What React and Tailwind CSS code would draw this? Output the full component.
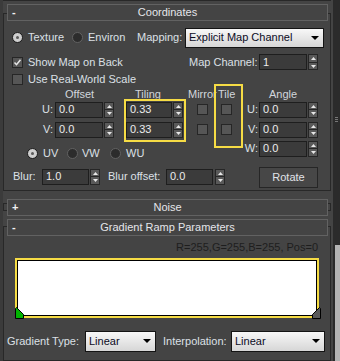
import React from 'react';

const Spinner = ({ className = '' }) => (
  <div className={`flex h-[16px] w-[10px] flex-col border border-[#262626] bg-[#595959] ${className}`}>
    <div className="flex flex-1 items-center justify-center border-b border-[#262626]">
      <svg width="5" height="3" viewBox="0 0 5 3">
        <path d="M2.5 0L5 3H0z" fill="#e8e8e8" />
      </svg>
    </div>
    <div className="flex flex-1 items-center justify-center">
      <svg width="5" height="3" viewBox="0 0 5 3">
        <path d="M0 0h5L2.5 3z" fill="#e8e8e8" />
      </svg>
    </div>
  </div>
);

const Field = ({ value, width = 'w-[48px]', className = '' }) => (
  <div
    className={`flex h-[16px] items-center border border-[#1e1e1e] bg-[#3b3b3b] pl-[3px] text-[#ececec] ${width} ${className}`}
  >
    {value}
  </div>
);

const Check = ({ on, className = '' }) => (
  <div
    className={`flex h-[11px] w-[11px] shrink-0 items-center justify-center border border-[#262626] bg-[#565656] ${className}`}
  >
    {on && (
      <svg width="9" height="9" viewBox="0 0 9 9">
        <path d="M1.5 4.5l2 2.2 4-5" stroke="#e6e6e6" strokeWidth="1.5" fill="none" />
      </svg>
    )}
  </div>
);

const Radio = ({ on, className = '' }) => (
  <div
    className={`flex h-[11px] w-[11px] shrink-0 items-center justify-center rounded-full border ${
      on ? 'border-[#1a1a1a] bg-[#cfcfcf]' : 'border-[#626262] bg-[#2c2c2c]'
    } ${className}`}
  >
    {on && <div className="h-[3px] w-[3px] rounded-full bg-[#5a5a5a]" />}
  </div>
);

const Dropdown = ({ label, width, className = '' }) => (
  <div
    className={`flex h-[20px] items-center justify-between border border-[#141414] bg-linear-to-b from-[#f8f8f8] to-[#d6d6d6] pl-[3px] pr-[4px] text-[#0b0b1e] ${width} ${className}`}
  >
    <span>{label}</span>
    <svg width="8" height="4" viewBox="0 0 8 4">
      <path d="M0 0h8L4 4z" fill="#000" />
    </svg>
  </div>
);

const RolloutHeader = ({ sign, title, className = '' }) => (
  <div
    className={`ml-[3px] flex h-[17px] w-[321px] items-center border border-[#626262] bg-[#444444] ${className}`}
  >
    <span className="w-[14px] pl-[4px] font-bold text-[#f2f2f2]">{sign}</span>
    <span className="flex-1 pr-[14px] text-center text-[#e4e6ea]">{title}</span>
  </div>
);

const Marker = ({ fill, flip }) => (
  <svg width="9" height="12" viewBox="0 0 9 12">
    <path
      d={flip ? 'M7.5 0.5L8.5 1.5V11.5H0.5V7.5L4 4z' : 'M1.5 0.5L0.5 1.5V11.5H8.5V7.5L5 4z'}
      fill={fill}
      stroke="#000"
      strokeWidth="1"
    />
  </svg>
);

export default function App() {
  return (
    <div className="flex h-[361px] w-[340px] overflow-hidden bg-[#444444] font-['Liberation_Sans',Arial,sans-serif] text-[11px] leading-none text-[#dce0e6]">
      <div className="w-[3px] shrink-0 bg-[#3b3b3b]" />

      <div className="flex w-[328px] shrink-0 flex-col">
        <div className="h-[1px] bg-[#282828]" />

        {/* Coordinates */}
        <div className="relative mt-[12px] h-[184px] border border-[#282828]">
          <RolloutHeader sign="-" title="Coordinates" className="-mt-[10px]" />

          <div className="mt-[7px] flex h-[20px] items-center pl-[8px]">
            <Radio on />
            <span className="ml-[5px] w-[39px]">Texture</span>
            <Radio className="ml-[5px]" />
            <span className="ml-[5px] w-[37px]">Environ</span>
            <span className="ml-[12px] w-[44px]">Mapping:</span>
            <Dropdown label="Explicit Map Channel" width="w-[139px]" className="ml-[4px]" />
          </div>

          <div className="mt-[6px] flex h-[17px] items-center pl-[8px]">
            <Check on />
            <span className="ml-[5px] w-[100px] whitespace-nowrap">Show Map on Back</span>
            <span className="ml-[61px] w-[67px] whitespace-nowrap">Map Channel:</span>
            <Field value="1" className="ml-[3px]" />
            <Spinner className="ml-[1px]" />
          </div>

          <div className="mt-[2px] flex h-[13px] items-center pl-[8px]">
            <Check />
            <span className="ml-[5px] whitespace-nowrap">Use Real-World Scale</span>
          </div>

          <div className="mt-[2px] flex">
            <div className="w-[240px]">
              <div className="flex h-[13px] items-center text-[#d2d6dc]">
                <span className="ml-[61px] w-[31px]">Offset</span>
                <span className="ml-[39px] w-[25px]">Tiling</span>
                <span className="ml-[28px] w-[27px] whitespace-nowrap">Mirror</span>
                <span className="ml-[3px]">Tile</span>
              </div>

              {['U:', 'V:'].map((l, i) => (
                <div key={l} className={`flex h-[16px] items-center ${i === 0 ? 'mt-[1px]' : 'mt-[4px]'}`}>
                  <span className="w-[49px] text-right">{l}</span>
                  <Field value="0.0" className="ml-[2px]" />
                  <Spinner className="ml-[1px]" />
                  <Field value="0.33" width="w-[46px]" className="ml-[12px]" />
                  <Spinner className="ml-[1px]" />
                  <Check className="ml-[14px]" />
                  <Check className="ml-[13px]" />
                </div>
              ))}

              <div className="mt-[9px] flex h-[14px] items-center">
                <Radio on className="ml-[23px]" />
                <span className="ml-[5px] w-[14px]">UV</span>
                <Radio className="ml-[10px]" />
                <span className="ml-[4px] w-[17px]">VW</span>
                <Radio className="ml-[11px]" />
                <span className="ml-[5px]">WU</span>
              </div>

              <div className="mt-[8px] flex h-[16px] items-center">
                <span className="ml-[9px] w-[22px]">Blur:</span>
                <Field value="1.0" width="w-[47px]" className="ml-[7px]" />
                <Spinner className="ml-[1px]" />
                <span className="ml-[8px] w-[55px] whitespace-nowrap">Blur offset:</span>
                <Field value="0.0" width="w-[47px]" className="ml-[3px]" />
                <Spinner className="ml-[2px]" />
              </div>
            </div>

            <div className="w-[86px]">
              <div className="flex h-[13px] items-center text-[#d2d6dc]">
                <span className="ml-[25px]">Angle</span>
              </div>
              {['U:', 'V:', 'W:'].map((l, i) => (
                <div
                  key={l}
                  className={`flex h-[16px] items-center ${i === 0 ? 'mt-[1px]' : i === 1 ? 'mt-[4px]' : 'mt-[3px]'}`}
                >
                  <span className="w-[14px] text-right">{l}</span>
                  <Field value="0.0" className="ml-[1px]" />
                  <Spinner className="ml-[1px]" />
                </div>
              ))}
              <div className="ml-[15px] mt-[10px] flex h-[21px] w-[59px] items-center justify-center border border-[#262626] bg-[#474747] text-[#e0e3e8]">
                Rotate
              </div>
            </div>
          </div>

          {/* annotation boxes */}
          <div className="absolute left-[120px] top-[85px] h-[43px] w-[62px] border-2 border-[#f6dc45]" />
          <div className="absolute left-[210px] top-[70px] h-[64px] w-[29px] border-2 border-[#f6dc45]" />
        </div>

        {/* Noise */}
        <div className="mt-[12px] h-[8px] border border-[#282828]">
          <RolloutHeader sign="+" title="Noise" className="-mt-[5px]" />
        </div>

        {/* Gradient Ramp Parameters */}
        <div className="mt-[15px] h-[140px] border border-[#282828]">
          <RolloutHeader sign="-" title="Gradient Ramp Parameters" className="-mt-[8px]" />

          <div className="mt-[6px] h-[11px] pr-[12px] text-right leading-[11px] text-[#1e1e1e]">
            R=255,G=255,B=255, Pos=0
          </div>

          <div className="relative ml-[11px] mt-[5px] h-[60px] w-[304px]">
            <div className="h-full w-full border-2 border-[#f6dc45]">
              <div className="h-full w-full border border-black bg-white" />
            </div>
            <div className="absolute left-0 top-[49px]">
              <Marker fill="#00b400" />
            </div>
            <div className="absolute right-[-2px] top-[49px]">
              <Marker fill="#5a5a5a" flip />
            </div>
          </div>

          <div className="mt-[13px] flex h-[21px] items-center">
            <span className="ml-[3px] w-[72px] whitespace-nowrap">Gradient Type:</span>
            <Dropdown label="Linear" width="w-[71px]" className="ml-[6px] h-[21px]" />
            <span className="ml-[7px] w-[66px] whitespace-nowrap">Interpolation:</span>
            <Dropdown label="Linear" width="w-[94px]" className="ml-[2px] h-[21px]" />
          </div>
        </div>
      </div>

      <div className="w-[2px] shrink-0" />

      <div className="flex w-[7px] shrink-0 flex-col bg-[#2b2b2b]">
        <div className="flex h-[245px] flex-col items-center">
          <div className="mt-[117px] flex flex-col gap-[1px]">
            <div className="h-[1px] w-[3px] bg-[#777]" />
            <div className="h-[1px] w-[3px] bg-[#777]" />
            <div className="h-[1px] w-[3px] bg-[#777]" />
          </div>
        </div>
        <div className="ml-[2px] flex-1 bg-[#b4b4b4]" />
      </div>
    </div>
  );
}
